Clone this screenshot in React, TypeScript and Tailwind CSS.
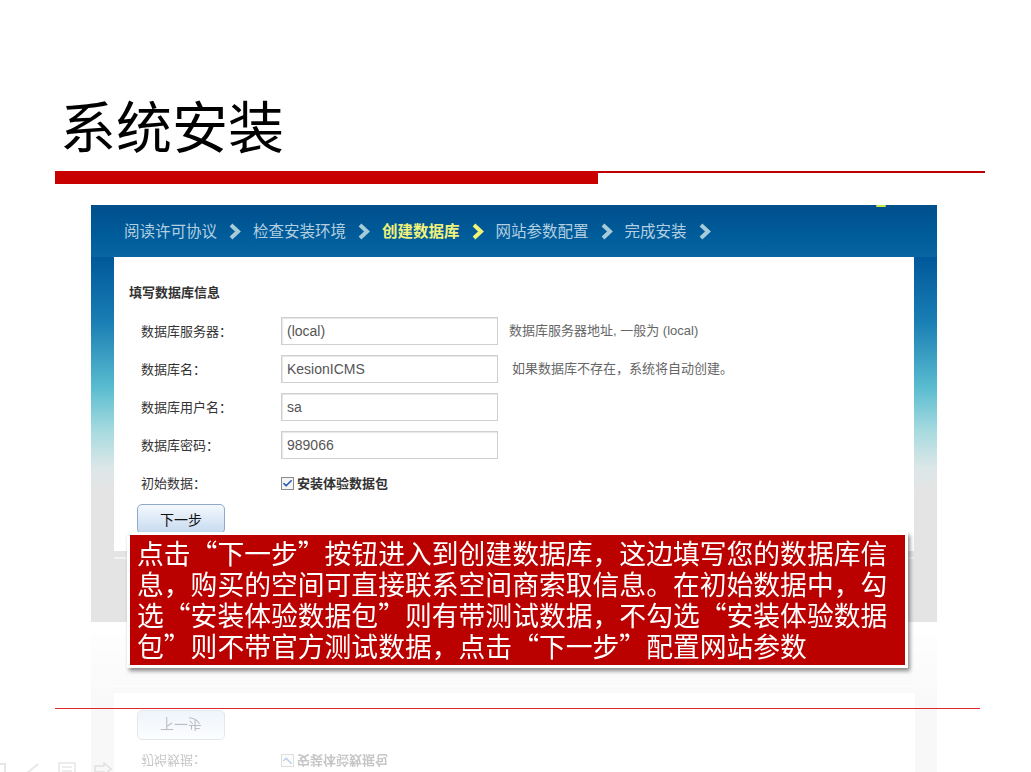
import { Check } from "lucide-react";

const steps = [
  { label: "阅读许可协议", active: false },
  { label: "检查安装环境", active: false },
  { label: "创建数据库", active: true },
  { label: "网站参数配置", active: false },
  { label: "完成安装", active: false },
];

const fields = [
  { label: "数据库服务器：", value: "(local)", hint: "数据库服务器地址, 一般为 (local)", hintPad: "ml-[11px]" },
  { label: "数据库名：", value: "KesionICMS", hint: "如果数据库不存在，系统将自动创建。", hintPad: "ml-[14px]" },
  { label: "数据库用户名：", value: "sa", hint: "", hintPad: "" },
  { label: "数据库密码：", value: "989066", hint: "", hintPad: "" },
];

const calloutLines = [
  "点击“下一步”按钮进入到创建数据库，这边填写您的数据库信",
  "息，购买的空间可直接联系空间商索取信息。在初始数据中，勾",
  "选“安装体验数据包”则有带测试数据，不勾选“安装体验数据",
  "包”则不带官方测试数据，点击“下一步”配置网站参数",
];

const Chevron = ({ active }: { active: boolean }) => (
  <svg width="14" height="17" viewBox="0 0 14 17" className="mx-[11px]">
    <polyline
      points="3,2 10,8.5 3,15"
      fill="none"
      stroke={active ? "#f1f27a" : "#a6cbd9"}
      strokeWidth="4"
      strokeLinejoin="miter"
    />
  </svg>
);

const Gutter = () => (
  <div className="w-[23px] shrink-0 bg-[linear-gradient(to_bottom,#00589a_0%,#1a7fb4_18%,#5bbdd0_36%,#a9dbe0_48%,#dde7e8_58%,#e4e4e4_64%,#e4e4e4_100%)]" />
);

const CheckRow = () => (
  <div className="flex h-[38px] items-center">
    <span className="w-[140px] text-[13px] text-[#333]">初始数据：</span>
    <span className="flex h-[13px] w-[13px] items-center justify-center border border-[#8a8a8a] bg-[#f4f4f4]">
      <Check size={11} strokeWidth={3.5} className="text-[#2454b8]" />
    </span>
    <span className="ml-[3px] text-[13px] font-bold text-[#333]">安装体验数据包</span>
  </div>
);

const NextButton = () => (
  <div className="mt-[2px] -ml-[4px] flex h-[30px] w-[88px] items-center justify-center rounded-[5px] border border-[#8fa9c6] bg-[linear-gradient(to_bottom,#f4f8fd,#c6daef)] text-[14px] text-[#111]">
    下一步
  </div>
);

// lower part of the screenshot, reused for the mirrored reflection
const LowerPart = () => (
  <div className="flex h-[158px]">
    <div className="w-[23px] shrink-0 bg-[#e4e4e4]" />
    <div className="flex w-[801px] flex-col">
      <div className="h-[87px] bg-white pl-[27px]">
        <CheckRow />
        <NextButton />
      </div>
      <div className="flex-1 bg-[#e4e4e4]">
        <div className="mt-[6px] h-[2px] bg-[#f2f2f2]" />
      </div>
    </div>
    <div className="w-[22px] shrink-0 bg-[#e4e4e4]" />
  </div>
);

const App = () => {
  return (
    <div className="relative h-[772px] w-[1031px] overflow-hidden bg-white font-['Noto_Sans_CJK_SC',sans-serif]">
      {/* TITLE */}
      <div className="h-[171px] pl-[60px] pt-[90px]">
        <h1 className="text-[56px] leading-[68px] font-normal text-black">系统安装</h1>
      </div>
      {/* RED BAR */}
      <div className="ml-[55px] flex">
        <div className="h-[13px] w-[543px] bg-[#c80000]" />
        <div className="h-[1.5px] w-[387px] bg-[#c00000]" />
      </div>

      {/* SCREENSHOT */}
      <div className="ml-[91px] mt-[21px] w-[846px]">
        <div className="relative flex h-[52px] items-center bg-[linear-gradient(to_bottom,#004f8c,#005c9a_60%,#0a66a2)] pl-[33px]">
          {steps.map((s) => (
            <div key={s.label} className="flex items-center">
              <span
                className={
                  s.active
                    ? "text-[15.5px] font-bold text-[#f1f27a]"
                    : "text-[15.5px] text-[#b3cfe0]"
                }
              >
                {s.label}
              </span>
              <Chevron active={s.active} />
            </div>
          ))}
          <div className="absolute left-[785px] top-0 h-[2px] w-[10px] rounded-full bg-[#c8e84a]" />
        </div>

        <div className="flex h-[365px]">
          <Gutter />
          <div className="flex w-[801px] flex-col">
            <div className="h-[294px] bg-white pl-[15px] pt-[26px]">
              <p className="h-[18px] text-[13px] leading-[18px] font-bold text-[#333]">填写数据库信息</p>
              <div className="mt-[11px] pl-[12px]">
                {fields.map((f) => (
                  <div key={f.label} className="flex h-[38px] items-center">
                    <span className="w-[140px] text-[13px] text-[#333]">{f.label}</span>
                    <div className="flex h-[28px] w-[217px] items-center border border-[#cfcfcf] px-[5px] font-['Liberation_Sans',sans-serif] text-[14px] text-[#555] shadow-[inset_1px_1px_1px_#e6e6e6]">
                      {f.value}
                    </div>
                    {f.hint && (
                      <span className={`${f.hintPad} font-['Liberation_Sans','Noto_Sans_CJK_SC',sans-serif] text-[13px] text-[#666]`}>
                        {f.hint}
                      </span>
                    )}
                  </div>
                ))}
                <CheckRow />
                <NextButton />
              </div>
            </div>
            <div className="flex-1 bg-[#e4e4e4]">
              <div className="mt-[6px] h-[2px] bg-[#f2f2f2]" />
            </div>
          </div>
          <Gutter />
        </div>
      </div>

      {/* REFLECTION */}
      <div className="ml-[91px] h-[150px] w-[846px] overflow-hidden">
        <div className="-scale-y-100 opacity-[0.28] [mask-image:linear-gradient(to_top,transparent,black_60%)]">
          <LowerPart />
        </div>
      </div>

      {/* CALLOUT */}
      <div className="absolute left-[127px] top-[532px] w-[781px] border-[3px] border-white bg-[#bb0000] pt-[2px] pb-[4px] pl-[7px] shadow-[2px_3px_4px_rgba(0,0,0,0.45)]">
        {calloutLines.map((line) => (
          <p key={line} className="h-[31px] whitespace-nowrap text-[26.8px] leading-[31px] text-white">
            {line}
          </p>
        ))}
      </div>

      {/* BOTTOM RULE */}
      <div className="absolute left-[55px] top-[708px] h-px w-[925px] bg-[#e02828]" />

      {/* SLIDE CONTROLS */}
      <div className="absolute bottom-[-4px] left-[-6px] flex items-center gap-[18px] opacity-20">
        <div className="h-[12px] w-[12px] border-2 border-[#888]" />
        <svg width="16" height="12" viewBox="0 0 16 12">
          <line x1="2" y1="11" x2="14" y2="1" stroke="#888" strokeWidth="2" />
        </svg>
        <svg width="18" height="14" viewBox="0 0 18 14">
          <rect x="1" y="1" width="16" height="12" fill="none" stroke="#888" strokeWidth="1.5" />
          <line x1="4" y1="5" x2="14" y2="5" stroke="#888" strokeWidth="1.5" />
          <line x1="4" y1="9" x2="14" y2="9" stroke="#888" strokeWidth="1.5" />
        </svg>
        <svg width="18" height="14" viewBox="0 0 18 14">
          <path d="M1 4h9V1l7 6-7 6V10H1z" fill="none" stroke="#888" strokeWidth="1.5" />
        </svg>
      </div>
    </div>
  );
};

export default App;
